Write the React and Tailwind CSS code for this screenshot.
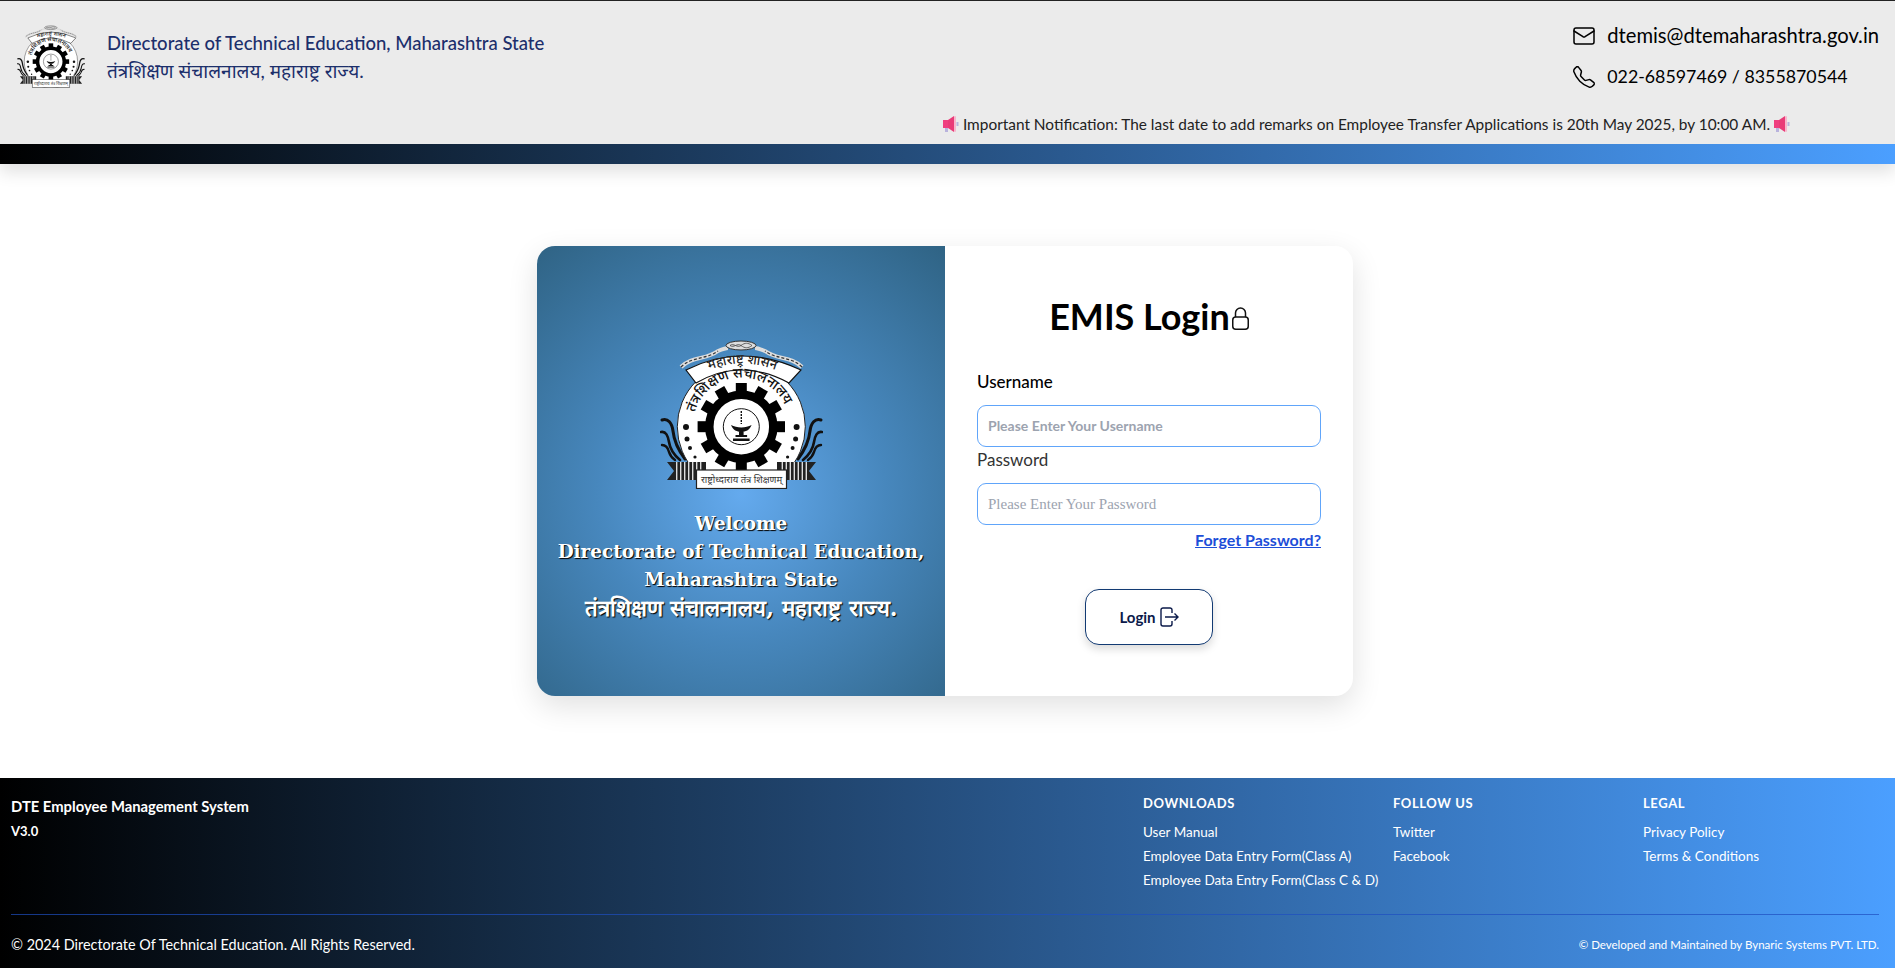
import { Mail } from 'lucide-react'
import { BsTelephone } from 'react-icons/bs'

const sans = 'font-["Lato","Noto_Sans","Liberation_Sans",sans-serif]'

const Gear = () => {
  const teeth = [0, 30, 60, 90, 120, 150, 180, 210, 240, 270, 300, 330]
  return (
    <g>
      {teeth.map((a) => (
        <rect key={a} x="75.8" y="43" width="11" height="12" fill="#000" transform={`rotate(${a} 81.3 86.7)`} />
      ))}
      <circle cx="81.3" cy="86.7" r="32" fill="none" stroke="#000" strokeWidth="8.5" />
      <circle cx="81.3" cy="86.7" r="18" fill="none" stroke="#111" strokeWidth="1" />
      {/* lamp */}
      <path d="M81.3 71v13" fill="none" stroke="#111" strokeWidth="1.4" strokeDasharray="2 1" />
      <path d="M71 85c2 5 6 7 10.3 7s8.300-2 10.300-7c-3 1.600-6.500 2.400-10.300 2.400S74 86.600 71 85z" fill="#111" />
      <path d="M79 92h4.600v3H79zM75.500 95h11.600v2H75.500zM73 98.500h16.600v2.500H73z" fill="#111" />
    </g>
  )
}

const Leaf = ({ flip }) => (
  <g transform={flip ? 'translate(163 0) scale(-1 1)' : undefined} fill="none" stroke="#111" strokeLinecap="round">
    <path d="M2 80c6-2 10 3 11 11 1 10 6 20 12 28" strokeWidth="3" />
    <path d="M1 92c5-1 7 4 8 10 1 7 5 13 11 18" strokeWidth="2.600" />
    <path d="M2 105c4 0 6 3 7 7 1 3 3 6 6 8" strokeWidth="2.400" />
  </g>
)

const Ribbon = ({ flip }) => (
  <g transform={flip ? 'translate(163 0) scale(-1 1)' : undefined}>
    <path d="M7 122h39v18H7l7-9z" fill="#222" />
    {[16, 20, 24, 28, 32, 36, 40].map((x) => (
      <rect key={x} x={x} y="122" width="1.4" height="18" fill="#ddd" />
    ))}
  </g>
)

const Emblem = ({ id, className }) => (
  <svg viewBox="0 0 163 149" className={className}>
    <Leaf />
    <Leaf flip />
    <path d="M21 27C32 16 46 20 58 11c5-2 8-3 10-3M142 27c-11-11-25-7-37-16-5-2-8-3-10-3" fill="none" stroke="#ddd" strokeWidth="4" />
    <path d="M21 27C32 16 46 20 58 11M142 27c-11-11-25-7-37-16" fill="none" stroke="#333" strokeWidth="1.200" strokeDasharray="3 2" />
    <ellipse cx="81" cy="5.500" rx="15" ry="4.500" fill="#ddd" stroke="#333" strokeWidth="1" />
    <path d="M70 5.500c4-3 7 3 11 0s7-3 11 0M70 5.500c4 3 7-3 11 0s7 3 11 0" fill="none" stroke="#444" strokeWidth="0.800" />
    <circle cx="81.3" cy="86.7" r="64" fill="#fff" stroke="#222" strokeWidth="1" />
    <path d="M26 30Q81 2 141 30L129 43Q81 17 36 43Z" fill="#fff" stroke="#111" strokeWidth="1.200" />
    <path id={`${id}-banner`} d="M38 35Q81 12 127 35" fill="none" />
    <text fontSize="13" fontWeight="500" fill="#222" fontFamily="'Noto Sans','Liberation Sans',sans-serif">
      <textPath href={`#${id}-banner`} startOffset="50%" textAnchor="middle">महाराष्ट्र शासन</textPath>
    </text>
    <path id={`${id}-ring`} d="M33 90A48.300 48.300 0 0 1 129.600 82" fill="none" />
    <text fontSize="14" fontWeight="500" fill="#111" fontFamily="'Noto Sans','Liberation Sans',sans-serif">
      <textPath href={`#${id}-ring`} startOffset="50%" textAnchor="middle">तंत्रशिक्षण संचालनालय</textPath>
    </text>
    <Gear />
    <g fill="#111">
      <circle cx="26" cy="87" r="3" />
      <circle cx="27" cy="99" r="2.500" />
      <circle cx="30" cy="108" r="2" />
      <circle cx="35" cy="117" r="1.600" />
      <circle cx="136.600" cy="87" r="3" />
      <circle cx="135.600" cy="99" r="2.500" />
      <circle cx="132.600" cy="108" r="2" />
      <circle cx="127.600" cy="117" r="1.600" />
    </g>
    <Ribbon />
    <Ribbon flip />
    <rect x="36.500" y="130" width="90" height="18.500" fill="#fff" stroke="#222" strokeWidth="1.200" />
    <text x="81.500" y="143" fontSize="9.500" fill="#333" textAnchor="middle" fontFamily="'Noto Sans','Liberation Sans',sans-serif">राष्ट्रोध्दाराय तंत्र शिक्षणम्</text>
  </svg>
)

const Megaphone = () => (
  <svg viewBox="0 0 16 18" className="inline-block h-[18px] w-[16px] align-[-3px]">
    <rect x="0" y="5" width="5" height="8" fill="#ef3f7f" />
    <rect x="2" y="13" width="3" height="4" fill="#b9b3dd" />
    <path d="M5 5l6-4v16l-6-4z" fill="#e93b78" />
    <rect x="11" y="1" width="2" height="16" rx="1" fill="#f7b6cc" />
    <rect x="13.500" y="7" width="2" height="4" fill="#b9b3dd" />
  </svg>
)

const LockIcon = () => (
  <svg viewBox="0 0 17 23" fill="none" stroke="#111" strokeWidth="1.500" className="ml-[2px] mt-[5px] h-[23px] w-[17px]">
    <rect x="0.750" y="10" width="15.500" height="12.200" rx="3" />
    <path d="M3.500 10V6a5 5 0 0 1 10 0v4" />
  </svg>
)

const LoginIcon = () => (
  <svg viewBox="0 0 19 20" fill="none" stroke="#0b1a4a" strokeWidth="1.400" className="h-[20px] w-[19px]">
    <path d="M12 6V3a2 2 0 0 0-2-2H3a2 2 0 0 0-2 2v14a2 2 0 0 0 2 2h7a2 2 0 0 0 2-2v-3" />
    <path d="M5 10h13M14.500 6.500 18 10l-3.500 3.500" />
  </svg>
)

const FooterColumn = ({ title, links }) => (
  <div className="w-[250px]">
    <h3 className="text-[13px] font-bold leading-[20px] tracking-[0.6px] text-white">{title}</h3>
    <ul className="mt-[7px] flex flex-col">
      {links.map((link) => (
        <li key={link} className="text-[13.5px] leading-[24px] text-white">{link}</li>
      ))}
    </ul>
  </div>
)

export default function App() {
  return (
    <div className={`flex h-[968px] flex-col bg-white ${sans}`}>
      {/* Header */}
      <header className="relative z-10 shadow-[0_8px_16px_rgba(0,0,0,0.12)]">
        <div className="flex h-[144px] flex-col border-t border-[#222] bg-[#ebebeb]">
          <div className="flex justify-between">
            <div className="flex items-start pl-[17px] pt-[24px]">
              <Emblem id="small" className="h-[63px] w-[68px]" />
              <div className="ml-[22px] pt-[4px]">
                <p className="text-[18.5px] font-medium leading-[28px] text-[#1c2f6b]">Directorate of Technical Education, Maharashtra State</p>
                <p className="mt-[1px] text-[19px] leading-[26px] text-[#1c2f6b]">तंत्रशिक्षण संचालनालय, महाराष्ट्र राज्य.</p>
              </div>
            </div>
            <div className="flex flex-col gap-[14px] pr-[16px] pt-[21px] leading-[27px] text-black">
              <div className="flex items-center gap-[11px] text-[20.2px]">
                <Mail className="h-[24px] w-[24px]" strokeWidth={1.5} />
                <span>dtemis@dtemaharashtra.gov.in</span>
              </div>
              <div className="flex items-center gap-[11px] text-[17.8px]">
                <BsTelephone className="h-[22px] w-[24px]" />
                <span>022-68597469 / 8355870544</span>
              </div>
            </div>
          </div>
          <div className="mt-auto flex justify-end pb-[10px] pr-[105px]">
            <p className="text-[15.4px] leading-[20px] text-[#222]">
              <Megaphone /> Important Notification: The last date to add remarks on Employee Transfer Applications is 20th May 2025, by 10:00 AM. <Megaphone />
            </p>
          </div>
        </div>
        <div className="h-[20px] bg-linear-to-r/srgb from-black to-[#4b9fff]" />
      </header>

      {/* Login card */}
      <main className="flex flex-1 items-center justify-center pr-[5px]">
        <div className="flex h-[450px] w-[816px] overflow-hidden rounded-[18px] bg-white shadow-[0_10px_30px_rgba(0,0,0,0.12)]">
          <div className="flex w-[408px] flex-col items-center bg-[radial-gradient(circle_at_50%_55%,#64aaee_0%,#4787bd_45%,#2f6384_100%)] pt-[94px]">
            <Emblem id="large" className="h-[149px] w-[163px]" />
            <div className="mt-[21px] text-center font-['DejaVu_Serif','Liberation_Serif',serif] text-[18.4px] font-bold leading-[28px] text-white [text-shadow:1px_1px_1px_#000]">
              <p>Welcome</p>
              <p>Directorate of Technical Education,</p>
              <p>Maharashtra State</p>
              <p className="text-[22.3px]">तंत्रशिक्षण संचालनालय, महाराष्ट्र राज्य.</p>
            </div>
          </div>
          <div className="flex flex-1 flex-col px-[32px] pt-[46px]">
            <h1 className="flex items-center justify-center text-[36px] font-bold leading-[48px] text-black">
              EMIS Login
              <LockIcon />
            </h1>
            <label className="mt-[30px] text-[17px] font-medium leading-[24px] text-black">Username</label>
            <input
              placeholder="Please Enter Your Username"
              className="mt-[11px] h-[42px] w-full rounded-[9px] border border-[#60a5fa] px-[10px] pb-[2px] text-[14px] font-bold outline-none placeholder:text-[#9ca3af]"
            />
            <label className="mt-[1px] text-[17px] leading-[24px] text-[#333]">Password</label>
            <input
              type="text"
              placeholder="Please Enter Your Password"
              className="mt-[11px] h-[42px] w-full rounded-[9px] border border-[#60a5fa] px-[10px] font-['Liberation_Serif',serif] text-[15px] outline-none placeholder:text-[#9ca3af]"
            />
            <a className="mt-[5px] self-end text-[16px] font-bold leading-[20px] text-[#1d4ed8] underline">Forget Password?</a>
            <button className="mt-[39px] flex h-[56px] w-[128px] items-center justify-center gap-[4px] self-center rounded-[14px] border border-[#123a73] bg-white text-[15px] font-bold text-[#0b1a4a] shadow-[0_4px_8px_rgba(0,0,0,0.15)]">
              Login
              <LoginIcon />
            </button>
          </div>
        </div>
      </main>

      {/* Footer */}
      <footer className="flex h-[190px] flex-col bg-linear-to-r/srgb from-black to-[#4b9fff] pl-[11px] pr-[16px]">
        <div className="flex h-[136px] justify-between pt-[15px]">
          <div>
            <p className="text-[14.8px] font-bold leading-[26px] text-white">DTE Employee Management System</p>
            <p className="text-[13px] font-bold leading-[25px] text-white">V3.0</p>
          </div>
          <div className="-mr-[14px] flex">
            <FooterColumn title="DOWNLOADS" links={['User Manual', 'Employee Data Entry Form(Class A)', 'Employee Data Entry Form(Class C & D)']} />
            <FooterColumn title="FOLLOW US" links={['Twitter', 'Facebook']} />
            <FooterColumn title="LEGAL" links={['Privacy Policy', 'Terms & Conditions']} />
          </div>
        </div>
        <div className="h-px bg-[#1e4fc0]/70" />
        <div className="flex flex-1 items-center justify-between pt-[7px] text-white">
          <p className="text-[14.4px]">© 2024 Directorate Of Technical Education. All Rights Reserved.</p>
          <p className="text-[11.5px]">© Developed and Maintained by Bynaric Systems PVT. LTD.</p>
        </div>
      </footer>
    </div>
  )
}
